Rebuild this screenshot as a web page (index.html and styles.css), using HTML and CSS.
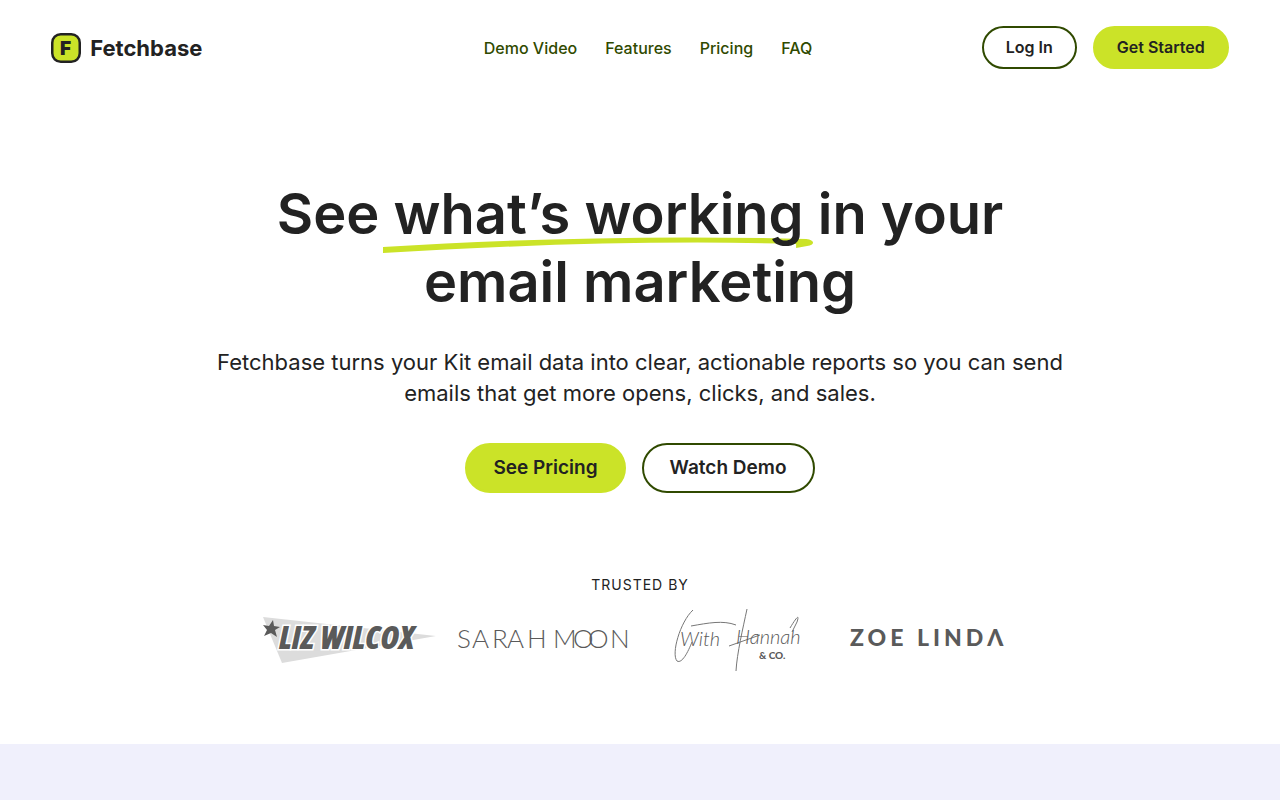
FILE: index.html
```html
<!DOCTYPE html>
<html lang="en">
<head>
  <meta charset="UTF-8">
  <meta name="viewport" content="width=device-width, initial-scale=1">
  <title>Fetchbase</title>
  <link rel="stylesheet" href="styles.css">
</head>
<body>
  <header class="header">
    <a class="brand" href="#">
      <svg class="brand-icon" viewBox="0 0 30 30" aria-hidden="true">
        <rect x="1.25" y="1.25" width="27.5" height="27.5" rx="8.5" fill="#cbe328" stroke="#222" stroke-width="2.5"/>
        <text x="9" y="22" class="brand-letter">F</text>
      </svg>
      <span>Fetchbase</span>
    </a>
    <nav class="nav">
      <a href="#demo">Demo Video</a>
      <a href="#features">Features</a>
      <a href="#pricing">Pricing</a>
      <a href="#faq">FAQ</a>
    </nav>
    <div class="actions">
      <a class="btn btn-outline" href="#login">Log In</a>
      <a class="btn btn-fill" href="#start">Get Started</a>
    </div>
  </header>

  <main>
    <section class="hero">
      <h1>See <span class="underlined">what’s working<svg class="swoosh" viewBox="0 0 429 18" preserveAspectRatio="none" aria-hidden="true"><path d="M0 11C130 3 270-1 422 3C431 4 431 9 423 10L412 12V8C280 4 130 9 0 17Z" fill="#cbe328"/></svg></span> in your email marketing</h1>
      <p class="lead">Fetchbase turns your Kit email data into clear, actionable reports so you can send emails that get more opens, clicks, and sales.</p>
      <div class="hero-actions">
        <a class="btn btn-large btn-fill" href="#pricing">See Pricing</a>
        <a class="btn btn-large btn-outline" href="#demo">Watch Demo</a>
      </div>

      <p class="trusted">Trusted by</p>
      <div class="logos">
        <svg class="logo" viewBox="0 0 180 64" role="img" aria-label="Liz Wilcox">
          <path d="M7 9L180 28L26 55Z" fill="#dcdcdc"/>
          <text x="23" y="41" class="logo-liz logo-halo">LIZ WILCOX</text>
          <path d="M17 12L18 18L24 19L19 22L21 29L15 25L8 28L11 22L7 17L13 18Z" fill="#5a5a5a"/>
        </svg>
        <svg class="logo" viewBox="0 0 180 64" role="img" aria-label="Sarah Moon">
          <text y="40" x="5 20 40 55 75 98 101 121 136 158" class="logo-sarah">SARAH MOON</text>
        </svg>
        <svg class="logo" viewBox="0 0 180 64" role="img" aria-label="With Hannah &amp; Co.">
          <path d="M45 2C32 14 23 46 29 53C34 56 40 44 44 34M43 18C60 15 75 12 88 17M99 1C95 20 89 45 88 63M81 38L112 27M142 20C148 10 152 5 149 14L144 24" fill="none" stroke="#777" stroke-width="1"/>
          <text x="32" y="38" class="logo-hannah">With</text>
          <text x="88" y="36" class="logo-hannah">Hannah</text>
          <text x="111" y="51" class="logo-co">&amp; CO.</text>
        </svg>
        <svg class="logo" viewBox="0 0 180 64" role="img" aria-label="Zoe Linda">
          <text x="6" y="38" class="logo-zoe">ZOE LINDΛ</text>
        </svg>
      </div>
    </section>

    <section class="band"></section>
  </main>
</body>
</html>
```
FILE: styles.css
```css
* {
  box-sizing: border-box;
}

body {
  margin: 0;
  background: #fff;
  color: #222;
  font-family: Inter, "Liberation Sans", sans-serif;
  font-size: 16px;
}

a {
  color: inherit;
  text-decoration: none;
}

.header {
  display: grid;
  grid-template-columns: 1fr auto 1fr;
  align-items: center;
  padding: 26px 4%;
}

.brand {
  display: flex;
  align-items: center;
  gap: 9px;
  font-size: 22px;
  font-weight: 700;
}

.brand-icon {
  width: 30px;
  height: 30px;
}

.brand-letter {
  font-size: 19px;
  font-weight: 900;
  fill: #222;
}

.nav {
  display: flex;
  gap: 28px;
  padding-left: 16px;
  color: #304a00;
  font-weight: 500;
}

.actions {
  display: flex;
  justify-content: flex-end;
  gap: 16px;
}

.btn {
  padding: 10px 22px;
  border: 2px solid #304a00;
  border-radius: 32px;
  font-weight: 600;
  line-height: 19px;
}

.btn-fill {
  border-color: #cbe328;
  background: #cbe328;
}

.btn-large {
  padding: 11px 26px;
  font-size: 19px;
  line-height: 24px;
}

.hero {
  padding: 85px 4% 72px;
  text-align: center;
}

h1 {
  position: relative;
  z-index: 0;
  max-width: 800px;
  margin: 0 auto 31px;
  font-size: 56px;
  font-weight: 600;
  line-height: 68px;
}

.underlined {
  position: relative;
  white-space: nowrap;
}

.swoosh {
  position: absolute;
  z-index: -1;
  left: -10px;
  bottom: -6px;
  width: calc(100% + 20px);
  height: 18px;
}

.lead {
  max-width: 860px;
  margin: 0 auto;
  font-size: 22px;
  line-height: 31px;
}

.hero-actions {
  display: flex;
  justify-content: center;
  gap: 16px;
  margin-top: 34px;
}

.trusted {
  margin: 82px 0 13px;
  font-size: 14px;
  line-height: 20px;
  letter-spacing: 1px;
  text-transform: uppercase;
}

.logos {
  display: flex;
  justify-content: center;
  gap: 16px;
}

.logo {
  width: 180px;
  height: 64px;
  fill: #5a5a5a;
}

.logo-liz {
  font-family: "Open Sans", sans-serif;
  font-size: 32px;
  font-style: italic;
  font-weight: 800;
  font-stretch: condensed;
}

.logo-halo {
  stroke: #fff;
  stroke-width: 3px;
  paint-order: stroke;
}

.logo-sarah {
  font-family: Lato, sans-serif;
  font-size: 26px;
  font-weight: 300;
}

.logo-hannah {
  font-family: Lato, sans-serif;
  font-size: 20px;
  font-style: italic;
  font-weight: 300;
}

.logo-co {
  font-family: Lato, sans-serif;
  font-size: 10px;
  font-weight: 900;
}

.logo-zoe {
  font-family: Lato, sans-serif;
  font-size: 23px;
  font-weight: 900;
  letter-spacing: 4px;
}

.band {
  min-height: 56px;
  background: #f0f0fc;
}
```
